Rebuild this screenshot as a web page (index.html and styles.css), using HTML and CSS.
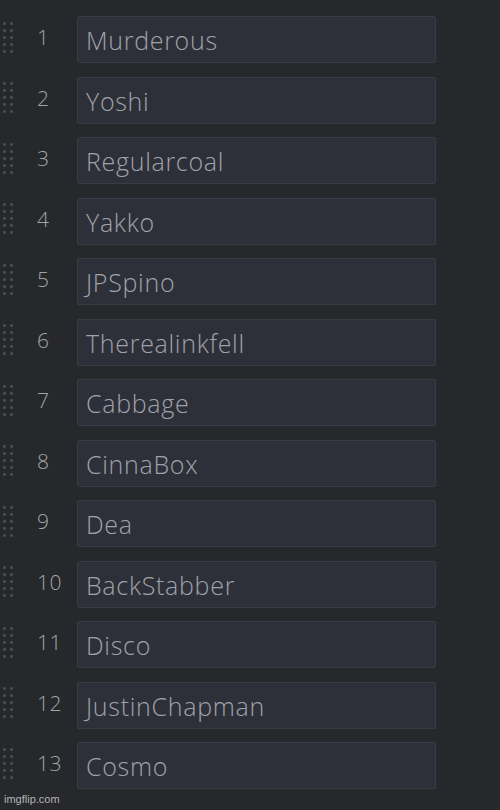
FILE: index.html
```html
<!DOCTYPE html>
<html>
<head>
<meta charset="utf-8">
<link rel="stylesheet" href="styles.css">
</head>
<body>
<div class="list">
  <div class="row"><div class="grip"></div><div class="num">1</div><div class="field">Murderous</div></div>
  <div class="row"><div class="grip"></div><div class="num">2</div><div class="field">Yoshi</div></div>
  <div class="row"><div class="grip"></div><div class="num">3</div><div class="field">Regularcoal</div></div>
  <div class="row"><div class="grip"></div><div class="num">4</div><div class="field">Yakko</div></div>
  <div class="row"><div class="grip"></div><div class="num">5</div><div class="field">JPSpino</div></div>
  <div class="row"><div class="grip"></div><div class="num">6</div><div class="field">Therealinkfell</div></div>
  <div class="row"><div class="grip"></div><div class="num">7</div><div class="field">Cabbage</div></div>
  <div class="row"><div class="grip"></div><div class="num">8</div><div class="field">CinnaBox</div></div>
  <div class="row"><div class="grip"></div><div class="num">9</div><div class="field">Dea</div></div>
  <div class="row"><div class="grip"></div><div class="num">10</div><div class="field">BackStabber</div></div>
  <div class="row"><div class="grip"></div><div class="num">11</div><div class="field">Disco</div></div>
  <div class="row"><div class="grip"></div><div class="num">12</div><div class="field">JustinChapman</div></div>
  <div class="row"><div class="grip"></div><div class="num">13</div><div class="field">Cosmo</div></div>
</div>
<div class="mark">imgflip.com</div>
</body>
</html>
```
FILE: styles.css
```css
html, body {
  margin: 0;
  padding: 0;
  background: #27282c;
  height: 810px;
  overflow: hidden;
}
body {
  font-family: "Open Sans", "Noto Sans", sans-serif;
  font-weight: 300;
}
.list {
  display: flex;
  flex-direction: column;
  gap: 13.5px;
  padding-top: 16px;
}
.row {
  display: flex;
  align-items: center;
  height: 47px;
}
.grip {
  width: 10px;
  height: 31px;
  margin-left: 3px;
  margin-top: -5px;
  background-image: radial-gradient(circle, #4a4c52 1.3px, transparent 1.6px);
  background-size: 7px 7px;
  background-position: -2px -2px;
}
.num {
  width: 40px;
  margin-left: 24px;
  color: #a3a4a8;
  font-size: 21px;
  letter-spacing: 0.5px;
  margin-top: -5px;
}
.field {
  box-sizing: border-box;
  width: 359px;
  height: 47px;
  background: #2e3039;
  border: 1px solid #393b45;
  border-radius: 2px;
  color: #a0a2a9;
  font-size: 25px;
  letter-spacing: 0.7px;
  padding-left: 8px;
  padding-top: 1px;
  display: flex;
  align-items: center;
}
.mark {
  position: absolute;
  left: 4px;
  top: 793px;
  font-family: "Liberation Sans", sans-serif;
  font-weight: 400;
  font-size: 11px;
  color: #b4b4b4;
}
```
